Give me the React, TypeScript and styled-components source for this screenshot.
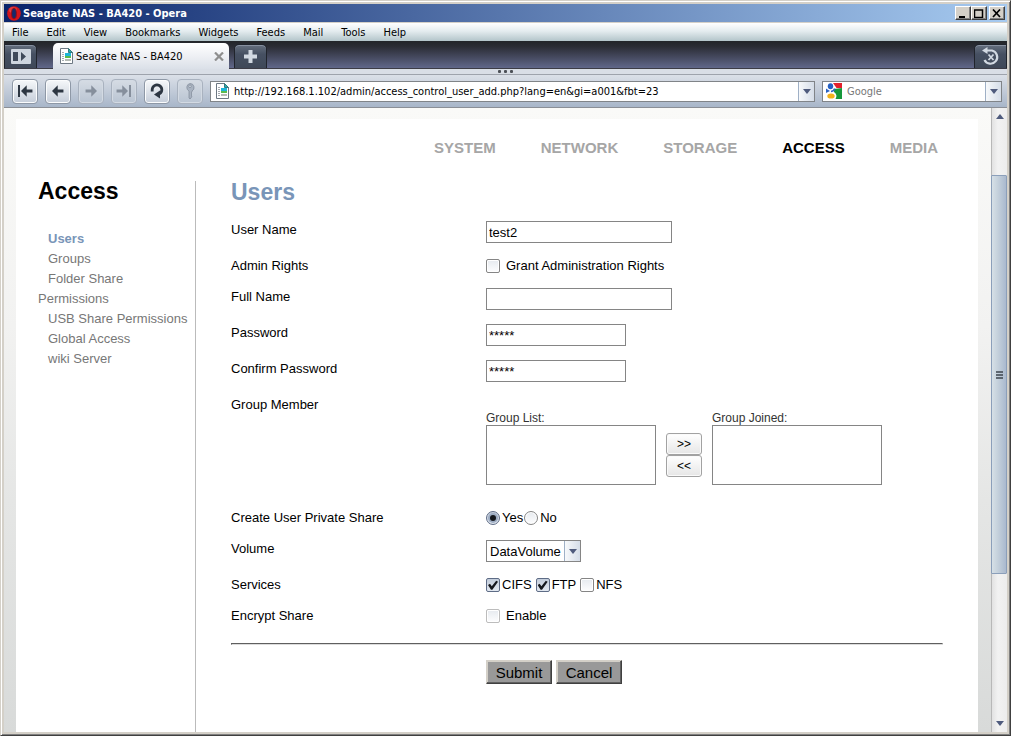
import React from "react";
import styled, { createGlobalStyle, css } from "styled-components";

const Global = createGlobalStyle`
  *, *::before, *::after { box-sizing: border-box; }
  body { margin: 0; background: #d4d0c8; font-family: "Liberation Sans", Arial, sans-serif; font-size: 13px; color: #000; }
  button, input, select { font: inherit; color: inherit; margin: 0; }
  h1, h2, ul { margin: 0; padding: 0; }
  a { color: inherit; text-decoration: none; }
  svg { display: block; flex: none; }
`;

const uiFont = css`
  font-family: "DejaVu Sans Condensed", Tahoma, sans-serif;
  font-size: 11px;
`;

const Frame = styled.div`
  min-height: 100vh;
  display: flex;
  flex-direction: column;
  background: #d4d0c8;
  border: 1px solid;
  border-color: #d4d0c8 #404040 #404040 #d4d0c8;
  box-shadow: inset 1px 1px #fff, inset -1px -1px #808080;
  padding: 3px;
`;

const TitleBar = styled.header`
  ${uiFont}
  height: 18px;
  display: flex;
  align-items: center;
  gap: 2px;
  padding: 0 2px 0 3px;
  color: #fff;
  font-weight: bold;
  background: linear-gradient(90deg, #0a246a, #a6caf0);
`;

const Title = styled.span`
  flex: 1;
`;

const WinButton = styled.button<{ $spaced?: boolean }>`
  width: 16px;
  height: 14px;
  margin-left: ${(p) => (p.$spaced ? 0 : -2)}px;
  padding: 0;
  background: #d4d0c8;
  border: 1px solid;
  border-color: #fff #404040 #404040 #fff;
  box-shadow: inset -1px -1px #808080;
  display: grid;
  place-items: center;
`;

const MenuBar = styled.nav`
  ${uiFont}
  height: 19px;
  display: flex;
  align-items: center;
  gap: 18px;
  padding: 0 8px;
  border-top: 1px solid #d4d0c8;
  background: linear-gradient(#fff, #e4ecef 45%, #b3c5ca);
`;

const MenuItem = styled.button`
  padding: 0;
  border: 0;
  background: none;
`;

const TabBar = styled.div`
  ${uiFont}
  height: 28px;
  display: flex;
  align-items: flex-end;
  border-bottom: 1px solid #3c3c46;
  background: linear-gradient(#222529, #2a2c34 20%, #60678a);
`;

const PanelButton = styled.button<{ $side: "left" | "mid" | "right" }>`
  width: 33px;
  height: 24px;
  padding: 0;
  display: grid;
  place-items: center;
  border: 1px solid #20242c;
  border-bottom: 0;
  border-radius: ${(p) => ({ left: "0 5px 0 0", mid: "5px 5px 0 0", right: "5px 0 0 0" })[p.$side]};
  margin-left: ${(p) => ({ left: "0", mid: "5px", right: "auto" })[p.$side]};
  background: linear-gradient(#66707f, #465062 40%, #3f4858);
  box-shadow: inset 0 1px #8790a0;
`;

const Tab = styled.div`
  width: 176px;
  height: 26px;
  margin: 0 0 -1px 16px;
  padding: 0 5px 0 7px;
  display: flex;
  align-items: center;
  gap: 3px;
  border-radius: 5px 5px 0 0;
  background: linear-gradient(#fff, #eef0f4 50%, #dbe0e8);
  span { flex: 1; }
`;

const CloseButton = styled.button`
  border: 0;
  padding: 0;
  background: none;
`;

const Grip = styled.div`
  height: 6px;
  display: flex;
  justify-content: center;
  gap: 3px;
  padding-top: 1px;
  background: #d9dee6;
  border-bottom: 1px solid #9ea3ac;
  i { width: 3px; height: 3px; border-radius: 1px; background: #4c5057; }
`;

const ToolBar = styled.div`
  height: 33px;
  display: flex;
  align-items: center;
  gap: 7px;
  padding: 0 5px 0 8px;
  border-bottom: 1px solid #8b8f96;
  background: linear-gradient(#dbe0e8, #a8b6c9);
`;

const NavButton = styled.button<{ $muted?: boolean }>`
  width: 26px;
  height: 25px;
  padding: 0;
  display: grid;
  place-items: center;
  border: 1px solid ${(p) => (p.$muted ? "#a9b2bf" : "#8e98a6")};
  border-radius: 4px;
  color: ${(p) => (p.$muted ? "#868f9c" : "#2d3642")};
  background: ${(p) => (p.$muted ? "linear-gradient(#d6dce4, #b9c4d2)" : "linear-gradient(#f6f8fa, #c5cdd9)")};
  box-shadow: inset 0 0 0 1px ${(p) => (p.$muted ? "#d3dae3" : "#fbfcfd")};
`;

const Field = styled.div<{ $search?: boolean }>`
  ${uiFont}
  flex: ${(p) => (p.$search ? "0 0 180px" : "1")};
  height: 21px;
  min-width: 0;
  display: flex;
  align-items: center;
  padding-left: ${(p) => (p.$search ? 3 : 5)}px;
  gap: 5px;
  border: 1px solid #808488;
  background: #fff;
  input {
    flex: 1;
    min-width: 0;
    padding: 0;
    border: 0;
    outline: 0;
    background: none;
  }
  input::placeholder { color: #777; opacity: 1; }
`;

const arrowFace = css`
  border: 0;
  border-left: 1px solid #9fb0c6;
  background: linear-gradient(90deg, #f7f9fb, #d5dde8);
`;

const DropButton = styled.button`
  ${arrowFace}
  width: 16px;
  height: 19px;
  padding: 0;
  display: grid;
  place-items: center;
`;

const Viewport = styled.div`
  flex: 1;
  display: flex;
`;

const Page = styled.div`
  flex: 1;
  display: flex;
  padding: 11px 13px 0 12px;
  background: linear-gradient(#fafaf8, #f2f2f1 35%, #e5e6e5 63%, #d8dad9);
`;

const Sheet = styled.div`
  flex: 1;
  display: flex;
  flex-direction: column;
  padding: 19px 35px 0 22px;
  background: #fff;
`;

const SiteNav = styled.nav`
  display: flex;
  justify-content: flex-end;
  gap: 45px;
  padding-right: 5px;
  margin-bottom: 23px;
  font-size: 15px;
  line-height: 20px;
  font-weight: bold;
`;

const SiteLink = styled.a<{ $active?: boolean }>`
  color: ${(p) => (p.$active ? "#000" : "#a6a6a6")};
`;

const Columns = styled.div`
  flex: 1;
  display: flex;
`;

const Sidebar = styled.aside`
  width: 158px;
  border-right: 1px solid #bbb;
`;

const Heading = styled.h1<{ $blue?: boolean }>`
  font-size: 23px;
  line-height: 22px;
  color: ${(p) => (p.$blue ? "#7995b8" : "#000")};
`;

const SideHeading = styled(Heading)`
  line-height: 20px;
  margin-bottom: 28px;
`;

const SideList = styled.ul`
  list-style: none;
  line-height: 20px;
  color: #777;
  white-space: nowrap;
`;

const SideItem = styled.li<{ $active?: boolean }>`
  text-indent: 10px;
  ${(p) => p.$active && "font-weight: bold; color: #7995b8;"}
  span { display: block; text-indent: 0; }
`;

const Form = styled.form`
  flex: 1;
  padding-left: 35px;
  min-width: 0;
`;

const FieldList = styled.div`
  padding-top: 18px;
`;

const Row = styled.div`
  display: grid;
  grid-template-columns: 255px 1fr;
  padding-bottom: 14px;
`;

const RowLabel = styled.label`
  line-height: 17px;
`;

const TextBox = styled.input<{ $w: number }>`
  width: ${(p) => p.$w}px;
  height: 22px;
  padding: 0 2px;
  border: 1px solid #858585;
  background: #fff;
  outline: 0;
`;

const Choices = styled.div<{ $gap?: number }>`
  height: 17px;
  display: flex;
  align-items: flex-end;
  gap: ${(p) => p.$gap ?? 0}px;
`;

const Choice = styled.label<{ $gap?: number }>`
  height: 15px;
  display: flex;
  align-items: flex-start;
  gap: ${(p) => p.$gap ?? 2}px;
  line-height: 14px;
`;

const Tick = styled.input`
  appearance: none;
  width: 14px;
  height: 14px;
  flex: none;
  display: grid;
  place-items: center;
  border: 1px solid #858585;
  border-radius: ${(p) => (p.type === "radio" ? "50%" : "2px")};
  background: linear-gradient(#e6eaef, #fdfdfe);
  box-shadow: inset 0 0 0 1px #fff;
  &:disabled { border-color: #bcbcbc; }
  &:checked {
    background: linear-gradient(#c3cddb, #e2e8f0);
    border-color: #5e6c86;
    box-shadow: none;
  }
  &[type="radio"]:checked::before {
    content: "";
    width: 6px;
    height: 6px;
    border-radius: 50%;
    background: #15181d;
    box-shadow: 0 0 0 2px #9dacc2;
  }
  &[type="checkbox"]:checked::before {
    content: "";
    width: 10px;
    height: 10px;
    background: #15181d;
    clip-path: polygon(0 50%, 20% 38%, 38% 62%, 82% 8%, 100% 18%, 44% 98%, 30% 98%);
  }
`;

const GroupRow = styled(Row)`
  padding-bottom: 24px;
`;

const Groups = styled.div`
  display: flex;
  align-items: flex-end;
  gap: 10px;
  padding-top: 15px;
`;

const GroupBox = styled.label`
  display: flex;
  flex-direction: column;
  font-size: 12px;
  line-height: 14px;
  color: #333;
  select {
    width: 170px;
    height: 60px;
    border: 1px solid #858585;
    border-radius: 0;
    background: #fff;
    outline: 0;
  }
`;

const Movers = styled.div`
  display: flex;
  flex-direction: column;
  padding-bottom: 8px;
`;

const Mover = styled.button`
  width: 36px;
  height: 22px;
  padding: 0;
  font-size: 12px;
  border: 1px solid #a2a2a2;
  border-radius: 3px;
  background: linear-gradient(#fff, #e6e6e6);
  box-shadow: inset 0 0 0 1px #fafafa;
`;

const Drop = styled.div`
  width: 95px;
  height: 22px;
  display: grid;
  grid-template-columns: 1fr 16px;
  border: 1px solid #858585;
  > * { grid-row: 1; }
  select {
    grid-column: 1 / 3;
    appearance: none;
    border: 0;
    padding: 0 3px;
    background: none;
    outline: 0;
  }
`;

const DropFace = styled.span`
  ${arrowFace}
  grid-column: 2;
  display: grid;
  place-items: center;
  pointer-events: none;
`;

const Rule = styled.hr`
  margin: 5px 0 15px;
  border: 1px solid;
  border-color: #5f5f5f #dcdcdc #dcdcdc #5f5f5f;
`;

const Actions = styled.div`
  display: flex;
  gap: 4px;
  padding-left: 255px;
`;

const ActionButton = styled.button`
  width: 66px;
  height: 24px;
  padding: 0;
  font-size: 15px;
  background: #999;
  border: 1px solid;
  border-color: #d4d0c8 #404040 #404040 #d4d0c8;
  box-shadow: inset -1px -1px #606060, inset 1px 1px #d4d0c8;
`;

const ScrollBar = styled.div`
  width: 16px;
  display: flex;
  flex-direction: column;
  background: linear-gradient(90deg, #e2e2e2, #f2f2f2 40%, #ededed);
  border-left: 1px solid #b8b8b8;
`;

const ScrollArrow = styled.button`
  height: 17px;
  padding: 0;
  border: 0;
  display: grid;
  place-items: center;
  background: none;
`;

const Track = styled.div`
  flex: 1;
  display: grid;
  grid-template-rows: 50fr 399fr 141fr;
`;

const Thumb = styled.div`
  grid-row: 2;
  margin-left: -1px;
  display: grid;
  place-items: center;
  border: 1px solid #8b9fba;
  border-radius: 1px;
  background: linear-gradient(90deg, #d6e0e6, #c5d1dc 40%, #aab9ce);
`;

const DownArrow = () => (
  <svg width="8" height="5" viewBox="0 0 8 5"><path d="M0 0h8L4 5z" fill="#4f5b7d" /></svg>
);

const PageIcon = () => (
  <svg width="13" height="16" viewBox="0 0 13 16">
    <path d="M.5.5h8l4 4v11H.5z" fill="#fff" stroke="#6d7883" />
    <path d="M8.500.5v4h4z" fill="#27aeb0" stroke="#38777c" />
    <path d="M2 4.500h2M2 6.500h2M2 8.500h2M2 10.500h2M2 12.500h2" stroke="#a5abb1" />
    <rect x="5" y="5" width="6" height="3" fill="#1cb6da" />
    <rect x="5" y="8" width="6" height="2" fill="#5bbb4e" />
    <rect x="5" y="11" width="6" height="2" fill="#b3b9b4" />
  </svg>
);

const arrowLeft = "M0 6.500 6.500 0v4.800H13v3.400H6.500V13z";

const NavIcon = ({ kind }: { kind: string }) => {
  const flip = kind === "forward" || kind === "last";
  if (kind === "reload")
    return (
      <svg width="16" height="16" viewBox="0 0 16 16">
        <path d="M3.200 8.500V6.800a4.800 4.800 0 1 1 7.300 4" fill="none" stroke="currentColor" strokeWidth="2.800" />
        <path d="M11 7.500v8l-6-4z" fill="currentColor" />
      </svg>
    );
  if (kind === "key")
    return (
      <svg width="10" height="17" viewBox="0 0 10 17">
        <path fillRule="evenodd" d="M5 .5a4 4 0 0 1 2 7.500v1l-1 1 1 1-1 1 1 1-1 2-1 1-1-1V8A4 4 0 0 1 5 .5zM5 2a1.300 1.300 0 1 0 0 2.600A1.300 1.300 0 0 0 5 2z" fill="#a9b3c1" stroke="#7f8998" strokeWidth=".7" />
      </svg>
    );
  const bar = kind === "first" || kind === "last";
  return (
    <svg width="16" height="14" viewBox="0 0 16 14">
      <g transform={flip ? "translate(16 0) scale(-1 1)" : undefined}>
        {bar && <path d="M1 1h2v12H1z" fill="currentColor" />}
        <path d={arrowLeft} transform={bar ? "translate(4 1.300) scale(.88)" : "translate(2 1.300) scale(.88)"} fill="currentColor" />
      </g>
    </svg>
  );
};

const OperaIcon = () => (
  <svg width="14" height="15" viewBox="0 0 14 15">
    <ellipse cx="7" cy="7.500" rx="6.800" ry="7.300" fill="#d3151b" />
    <ellipse cx="6" cy="4" rx="4" ry="3" fill="#ec5a5a" opacity=".6" />
    <ellipse cx="7" cy="7.500" rx="2.400" ry="5.300" fill="#14296c" stroke="#9b0c10" />
  </svg>
);

const GoogleIcon = () => (
  <svg width="16" height="16" viewBox="0 0 16 16">
    <path d="M7 0h9v5H10.500z" fill="#e2202c" />
    <path d="M8 6l8-1v11H9.500q2.500-4-1.500-7z" fill="#16983b" />
    <path d="M0 5.500l4 2.500L0 10z" fill="#2a62c4" />
    <ellipse cx="4.500" cy="3.200" rx="2.700" ry="3" fill="#2460c4" />
    <path d="M5 8.500q3.500-.5 3.500-3" stroke="#2a62c4" strokeWidth="1.600" fill="none" />
    <ellipse cx="5" cy="13" rx="3.700" ry="2.600" fill="#f2b21c" />
  </svg>
);

const navButtons = [
  { kind: "first", label: "Rewind" },
  { kind: "back", label: "Back" },
  { kind: "forward", label: "Forward", muted: true },
  { kind: "last", label: "Fast forward", muted: true },
  { kind: "reload", label: "Reload" },
  { kind: "key", label: "Wand", muted: true },
];

const menus = ["File", "Edit", "View", "Bookmarks", "Widgets", "Feeds", "Mail", "Tools", "Help"];
const sections = ["SYSTEM", "NETWORK", "STORAGE", "ACCESS", "MEDIA"];

function Fields() {
  return (
    <FieldList>
      <Row>
        <RowLabel htmlFor="user">User Name</RowLabel>
        <TextBox id="user" $w={186} defaultValue="test2" />
      </Row>
      <Row>
        <RowLabel htmlFor="admin">Admin Rights</RowLabel>
        <Choices>
          <Choice $gap={6}><Tick type="checkbox" id="admin" />Grant Administration Rights</Choice>
        </Choices>
      </Row>
      <Row>
        <RowLabel htmlFor="full">Full Name</RowLabel>
        <TextBox id="full" $w={186} />
      </Row>
      <Row>
        <RowLabel htmlFor="pass">Password</RowLabel>
        <TextBox id="pass" $w={140} defaultValue="*****" autoComplete="off" />
      </Row>
      <Row>
        <RowLabel htmlFor="confirm">Confirm Password</RowLabel>
        <TextBox id="confirm" $w={140} defaultValue="*****" autoComplete="off" />
      </Row>
      <GroupRow>
        <RowLabel htmlFor="groups">Group Member</RowLabel>
        <Groups>
          <GroupBox>Group List:<select id="groups" multiple /></GroupBox>
          <Movers>
            <Mover type="button">&gt;&gt;</Mover>
            <Mover type="button">&lt;&lt;</Mover>
          </Movers>
          <GroupBox>Group Joined:<select multiple /></GroupBox>
        </Groups>
      </GroupRow>
      <Row>
        <RowLabel htmlFor="share-yes">Create User Private Share</RowLabel>
        <Choices $gap={1}>
          <Choice><Tick type="radio" name="share" id="share-yes" defaultChecked />Yes</Choice>
          <Choice><Tick type="radio" name="share" />No</Choice>
        </Choices>
      </Row>
      <Row>
        <RowLabel htmlFor="volume">Volume</RowLabel>
        <Drop>
          <select id="volume"><option>DataVolume</option></select>
          <DropFace><DownArrow /></DropFace>
        </Drop>
      </Row>
      <Row>
        <RowLabel htmlFor="cifs">Services</RowLabel>
        <Choices $gap={4}>
          <Choice><Tick type="checkbox" id="cifs" defaultChecked />CIFS</Choice>
          <Choice><Tick type="checkbox" defaultChecked />FTP</Choice>
          <Choice><Tick type="checkbox" />NFS</Choice>
        </Choices>
      </Row>
      <Row>
        <RowLabel htmlFor="encrypt">Encrypt Share</RowLabel>
        <Choices>
          <Choice $gap={6}><Tick type="checkbox" id="encrypt" disabled />Enable</Choice>
        </Choices>
      </Row>
    </FieldList>
  );
}

export default function App() {
  return (
    <>
      <Global />
      <Frame>
        <TitleBar>
          <OperaIcon />
          <Title>Seagate NAS - BA420 - Opera</Title>
          <WinButton aria-label="Minimize">
            <svg width="10" height="9"><path d="M1 7h6v2H1z" /></svg>
          </WinButton>
          <WinButton aria-label="Maximize">
            <svg width="10" height="9"><path d="M.5 1h8v7.500h-8zM0 1h9" fill="none" stroke="#000" strokeWidth="1.500" /></svg>
          </WinButton>
          <WinButton aria-label="Close" $spaced>
            <svg width="10" height="9"><path d="M1 .5l7 7.500M8 .5l-7 7.500" stroke="#000" strokeWidth="1.700" /></svg>
          </WinButton>
        </TitleBar>
        <MenuBar>
          {menus.map((m) => <MenuItem key={m}>{m}</MenuItem>)}
        </MenuBar>
        <TabBar>
          <PanelButton $side="left" aria-label="Panels">
            <svg width="20" height="15" viewBox="0 0 20 15">
              <rect width="20" height="15" rx="1" fill="#ced5de" />
              <path d="M2 3h5v9H2zM10 3l5 4.500-5 4.500z" fill="#3f4959" />
            </svg>
          </PanelButton>
          <Tab>
            <PageIcon />
            <span>Seagate NAS - BA420</span>
            <CloseButton aria-label="Close tab">
              <svg width="10" height="9" viewBox="0 0 10 9"><path d="M1 .5l8 8M9 .5l-8 8" stroke="#8e8e8e" strokeWidth="2.200" /></svg>
            </CloseButton>
          </Tab>
          <PanelButton $side="mid" aria-label="New tab">
            <svg width="13" height="13" viewBox="0 0 13 13"><path d="M4.500 0h4v4.500H13v4H8.500V13h-4V8.500H0v-4h4.500z" fill="#d2d9e2" /></svg>
          </PanelButton>
          <PanelButton $side="right" aria-label="Closed tabs">
            <svg width="18" height="19" viewBox="0 0 18 19">
              <path d="M5 3.500h5a6.700 6.700 0 1 1-7.500 9.500" fill="none" stroke="#d2d9e2" strokeWidth="2.200" />
              <path d="M0 3.500 5.500 0v7z" fill="#d2d9e2" />
              <path d="M6.500 7.500l5 5.500M11.500 7.500l-5 5.500" stroke="#d2d9e2" strokeWidth="1.800" />
            </svg>
          </PanelButton>
        </TabBar>
        <Grip><i /><i /><i /></Grip>
        <ToolBar>
          {navButtons.map((b) => (
            <NavButton key={b.kind} $muted={b.muted} aria-label={b.label}><NavIcon kind={b.kind} /></NavButton>
          ))}
          <Field>
            <PageIcon />
            <input aria-label="Address" defaultValue="http://192.168.1.102/admin/access_control_user_add.php?lang=en&gi=a001&fbt=23" />
            <DropButton aria-label="Address history"><DownArrow /></DropButton>
          </Field>
          <Field $search>
            <GoogleIcon />
            <input aria-label="Search" placeholder="Google" />
            <DropButton aria-label="Search engines"><DownArrow /></DropButton>
          </Field>
        </ToolBar>
        <Viewport>
          <Page>
            <Sheet>
              <SiteNav>
                {sections.map((s) => <SiteLink key={s} href="#" $active={s === "ACCESS"}>{s}</SiteLink>)}
              </SiteNav>
              <Columns>
                <Sidebar>
                  <SideHeading>Access</SideHeading>
                  <SideList>
                    <SideItem $active><a href="#">Users</a></SideItem>
                    <SideItem><a href="#">Groups</a></SideItem>
                    <SideItem><a href="#">Folder Share <span>Permissions</span></a></SideItem>
                    <SideItem><a href="#">USB Share Permissions</a></SideItem>
                    <SideItem><a href="#">Global Access</a></SideItem>
                    <SideItem><a href="#">wiki Server</a></SideItem>
                  </SideList>
                </Sidebar>
                <Form onSubmit={(e) => e.preventDefault()}>
                  <Heading as="h2" $blue>Users</Heading>
                  <Fields />
                  <Rule />
                  <Actions>
                    <ActionButton type="submit">Submit</ActionButton>
                    <ActionButton type="button">Cancel</ActionButton>
                  </Actions>
                </Form>
              </Columns>
            </Sheet>
          </Page>
          <ScrollBar>
            <ScrollArrow aria-label="Scroll up">
              <svg width="8" height="5" viewBox="0 0 8 5"><path d="M0 5h8L4 0z" fill="#4f5b7d" /></svg>
            </ScrollArrow>
            <Track>
              <Thumb>
                <svg width="7" height="8" viewBox="0 0 7 8"><path d="M0 1h7M0 4h7M0 7h7" stroke="#3d444d" strokeWidth="1.500" /></svg>
              </Thumb>
            </Track>
            <ScrollArrow aria-label="Scroll down"><DownArrow /></ScrollArrow>
          </ScrollBar>
        </Viewport>
      </Frame>
    </>
  );
}
